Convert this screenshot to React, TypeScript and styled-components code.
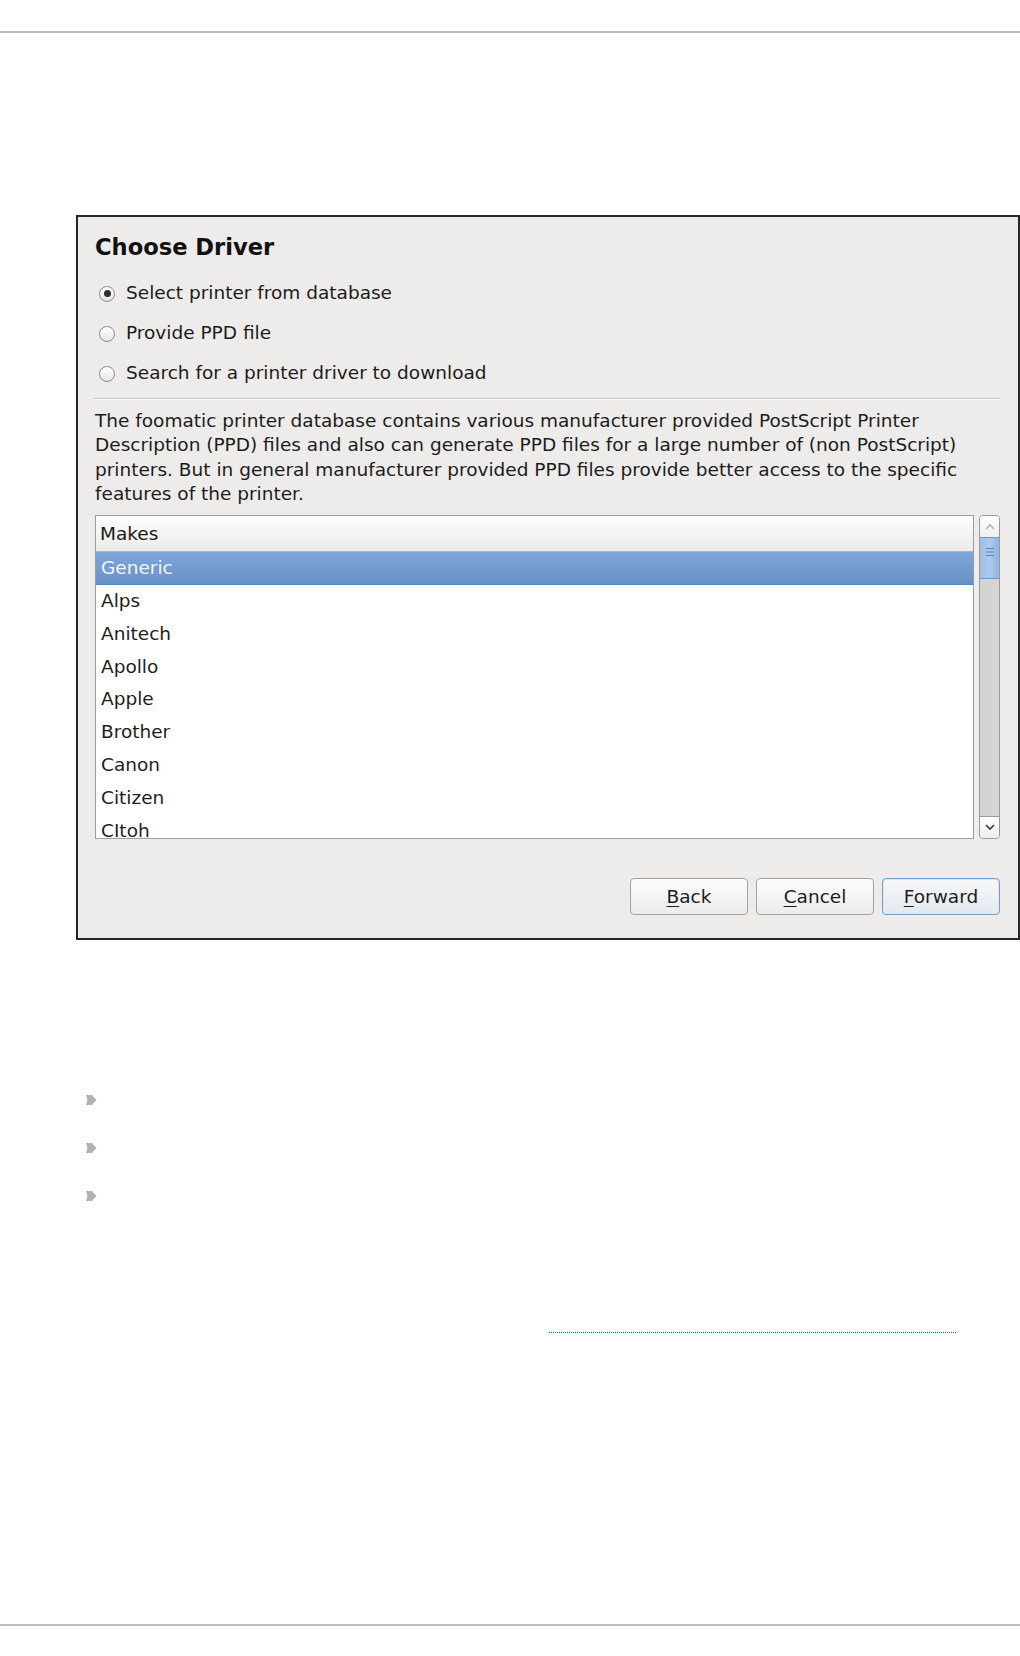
import React from "react";
import styled, { createGlobalStyle } from "styled-components";

const Global = createGlobalStyle`
  html, body { margin: 0; padding: 0; background: #ffffff; }
  body { font-family: "DejaVu Sans", "Liberation Sans", sans-serif; color: #1a1a1a; }
  * { box-sizing: border-box; }
`;

const Page = styled.div`
  min-height: 1656px;
  display: flex;
  flex-direction: column;
  background: #fff;
`;

const HeaderRule = styled.div`
  height: 33px;
  border-bottom: 2px solid #bcbcbc;
`;

const Figure = styled.div`
  margin: 182px 0 0 76px;
`;

const Dialog = styled.div`
  width: 944px;
  height: 725px;
  border: 2px solid #262626;
  background: #edeceb;
  padding: 16px 18px 23px 17px;
  display: flex;
  flex-direction: column;
  font-family: "DejaVu Sans", sans-serif;
  font-size: 18.5px;
  color: #1c1c1c;
`;

const Title = styled.div`
  font-weight: bold;
  font-size: 22.6px;
  line-height: 28px;
  color: #111;
`;

const RadioGroup = styled.div`
  margin-top: 12px;
  display: flex;
  flex-direction: column;
`;

const RadioRow = styled.label`
  height: 40px;
  display: flex;
  align-items: center;
  gap: 11px;
  padding-left: 4px;
  line-height: 40px;
`;

const RadioCircle = styled.span<{ $checked?: boolean }>`
  width: 16px;
  height: 16px;
  border-radius: 50%;
  border: 1px solid #8e8e8e;
  background: linear-gradient(#ffffff, #e6e6e6);
  display: flex;
  align-items: center;
  justify-content: center;
  flex-shrink: 0;
  margin-top: 1px;
  &::after {
    content: "";
    width: 7px;
    height: 7px;
    border-radius: 50%;
    background: #2e2e2e;
    display: ${(p) => (p.$checked ? "block" : "none")};
  }
`;

const Separator = styled.div`
  margin: 5px 0 0 -1px;
  height: 2px;
  border-top: 1px solid #c5c4c2;
  border-bottom: 1px solid #fbfbfb;
`;

const Description = styled.p`
  margin: 9px 0 0 0;
  line-height: 24.3px;
  width: 905px;
`;

const ListArea = styled.div`
  margin-top: 9px;
  display: flex;
  gap: 5px;
  height: 324px;
`;

const ListBox = styled.div`
  flex: 1;
  border: 1px solid #9c9c9c;
  background: #fff;
  overflow: hidden;
  display: flex;
  flex-direction: column;
`;

const ListHeader = styled.div`
  height: 36px;
  flex-shrink: 0;
  background: linear-gradient(#fdfdfd, #ebebea);
  border-bottom: 1px solid #b4b4b4;
  padding-left: 4px;
  line-height: 36px;
  color: #1a1a1a;
`;

const ListRow = styled.div<{ $selected?: boolean }>`
  height: 32.8px;
  flex-shrink: 0;
  line-height: 32.8px;
  padding-left: 5px;
  color: ${(p) => (p.$selected ? "#f2f6fc" : "#1e1e1e")};
  background: ${(p) =>
    p.$selected ? "linear-gradient(#7ea6d9, #6891c6)" : "transparent"};
  border-bottom: ${(p) => (p.$selected ? "1px solid #5e86bb" : "none")};
`;

const Scrollbar = styled.div`
  width: 21px;
  display: flex;
  flex-direction: column;
  border: 1px solid #9a9a9a;
  border-radius: 4px;
  background: #d4d4d3;
  overflow: hidden;
`;

const ScrollButton = styled.div`
  height: 21px;
  flex-shrink: 0;
  background: linear-gradient(#ffffff, #eeeeee);
  display: flex;
  align-items: center;
  justify-content: center;
`;

const ScrollThumb = styled.div`
  height: 42px;
  flex-shrink: 0;
  background: linear-gradient(90deg, #9dbde6, #aecbef 50%, #8fb3e2);
  border-top: 1px solid #6f95c6;
  border-bottom: 1px solid #6f95c6;
  display: flex;
  align-items: flex-start;
  justify-content: center;
  padding-top: 9px;
`;

const ScrollTrack = styled.div`
  flex: 1;
  border-bottom: 1px solid #9a9a9a;
`;

const ButtonBar = styled.div`
  margin-top: auto;
  display: flex;
  justify-content: flex-end;
  gap: 8px;
`;

const Button = styled.button<{ $default?: boolean }>`
  width: 118px;
  height: 37px;
  border-radius: 4px;
  border: 1px solid ${(p) => (p.$default ? "#7c9cc4" : "#a2a2a2")};
  background: ${(p) =>
    p.$default
      ? "linear-gradient(#f6f8fb, #e4e9f0)"
      : "linear-gradient(#fcfcfc, #ececec)"};
  box-shadow: ${(p) => (p.$default ? "inset 0 0 0 1px #dbe6f3" : "none")};
  font-family: "DejaVu Sans", sans-serif;
  font-size: 18.5px;
  color: #1c1c1c;
  padding: 0;
  line-height: 35px;
  u { text-decoration-thickness: 1px; text-underline-offset: 3px; }
`;

const BulletList = styled.ul`
  list-style: none;
  margin: 155px 0 0 0;
  padding: 0 0 0 86px;
`;

const BulletItem = styled.li`
  height: 48px;
  display: flex;
  align-items: flex-start;
`;

const LinkRow = styled.div`
  margin-top: 84px;
  padding-left: 549px;
`;

const DottedLink = styled.a`
  display: block;
  width: 407px;
  height: 10px;
  border-bottom: 1px dotted #1466c8;
`;

const FooterRule = styled.div`
  margin-top: auto;
  height: 32px;
  border-top: 2px solid #bcbcbc;
`;

const makes = [
  "Generic",
  "Alps",
  "Anitech",
  "Apollo",
  "Apple",
  "Brother",
  "Canon",
  "Citizen",
  "CItoh",
  "Compaq",
];

const Chevron = ({ up, color }: { up?: boolean; color: string }) => (
  <svg width="10" height="7" viewBox="0 0 10 7">
    <path
      d={up ? "M1 6 L5 2 L9 6" : "M1 1 L5 5 L9 1"}
      fill="none"
      stroke={color}
      strokeWidth="1.6"
    />
  </svg>
);

const Grip = () => (
  <svg width="8" height="10" viewBox="0 0 8 10">
    <path d="M0 1.5H8M0 5H8M0 8.5H8" stroke="#5b7fae" strokeWidth="1.2" />
  </svg>
);

const BulletIcon = () => (
  <svg width="11" height="10" viewBox="0 0 11 10">
    <polygon points="0,0 6,0 10.5,5 6,10 0,10 1.5,5" fill="#b3b3b3" />
  </svg>
);

export default function App() {
  return (
    <>
      <Global />
      <Page>
        <HeaderRule />
        <Figure>
          <Dialog>
            <Title>Choose Driver</Title>
            <RadioGroup>
              <RadioRow>
                <RadioCircle $checked />
                Select printer from database
              </RadioRow>
              <RadioRow>
                <RadioCircle />
                Provide PPD file
              </RadioRow>
              <RadioRow>
                <RadioCircle />
                Search for a printer driver to download
              </RadioRow>
            </RadioGroup>
            <Separator />
            <Description>
              The foomatic printer database contains various manufacturer
              provided PostScript Printer Description (PPD) files and also can
              generate PPD files for a large number of (non PostScript)
              printers. But in general manufacturer provided PPD files provide
              better access to the specific features of the printer.
            </Description>
            <ListArea>
              <ListBox>
                <ListHeader>Makes</ListHeader>
                {makes.map((m, i) => (
                  <ListRow key={m} $selected={i === 0}>
                    {m}
                  </ListRow>
                ))}
              </ListBox>
              <Scrollbar>
                <ScrollButton>
                  <Chevron up color="#b5b5b5" />
                </ScrollButton>
                <ScrollThumb>
                  <Grip />
                </ScrollThumb>
                <ScrollTrack />
                <ScrollButton>
                  <Chevron color="#3a3a3a" />
                </ScrollButton>
              </Scrollbar>
            </ListArea>
            <ButtonBar>
              <Button>
                <u>B</u>ack
              </Button>
              <Button>
                <u>C</u>ancel
              </Button>
              <Button $default>
                <u>F</u>orward
              </Button>
            </ButtonBar>
          </Dialog>
        </Figure>
        <BulletList>
          <BulletItem>
            <BulletIcon />
          </BulletItem>
          <BulletItem>
            <BulletIcon />
          </BulletItem>
          <BulletItem>
            <BulletIcon />
          </BulletItem>
        </BulletList>
        <LinkRow>
          <DottedLink />
        </LinkRow>
        <FooterRule />
      </Page>
    </>
  );
}
